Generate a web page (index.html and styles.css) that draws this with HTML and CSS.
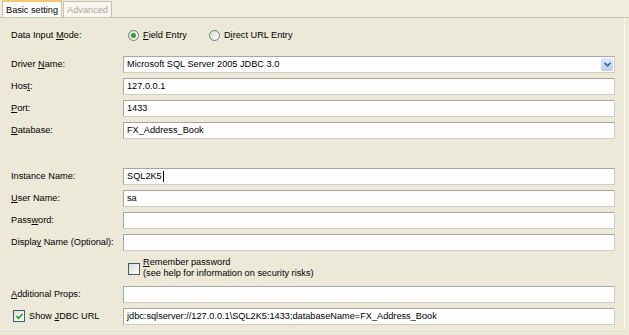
FILE: index.html
```html
<!DOCTYPE html>
<html lang="en">
<head>
    <meta charset="UTF-8">
    <title>Connection Settings</title>
    <link rel="stylesheet" href="styles.css">
</head>
<body>
    <div class="tabs">
        <div class="tab active">Basic setting</div>
        <div class="tab disabled">Advanced</div>
    </div>
    <div class="panel">
        <div class="row mode">
            <label class="lbl">Data Input <u>M</u>ode:</label>
            <div class="radios">
                <span class="radio checked"></span><span class="rtext"><u>F</u>ield Entry</span>
                <span class="radio second"></span><span class="rtext">D<u>i</u>rect URL Entry</span>
            </div>
        </div>
        <div class="row first">
            <label class="lbl">Driver <u>N</u>ame:</label>
            <div class="box select">
                <span class="val">Microsoft SQL Server 2005 JDBC 3.0</span>
                <span class="drop"><svg width="7" height="5" viewBox="0 0 7 5"><path d="M0.5 0.8 L3.5 3.8 L6.5 0.8" fill="none" stroke="#4d6185" stroke-width="1.6"/></svg></span>
            </div>
        </div>
        <div class="row">
            <label class="lbl">Hos<u>t</u>:</label>
            <div class="box"><span class="val">127.0.0.1</span></div>
        </div>
        <div class="row">
            <label class="lbl"><u>P</u>ort:</label>
            <div class="box"><span class="val">1433</span></div>
        </div>
        <div class="row">
            <label class="lbl"><u>D</u>atabase:</label>
            <div class="box"><span class="val">FX_Address_Book</span></div>
        </div>
        <div class="row spaced">
            <label class="lbl">Instance Name:</label>
            <div class="box"><span class="val">SQL2K5<span class="caret"></span></span></div>
        </div>
        <div class="row">
            <label class="lbl"><u>U</u>ser Name:</label>
            <div class="box"><span class="val">sa</span></div>
        </div>
        <div class="row">
            <label class="lbl">Pass<u>w</u>ord:</label>
            <div class="box"></div>
        </div>
        <div class="row">
            <label class="lbl">Displa<u>y</u> Name (Optional):</label>
            <div class="box"></div>
        </div>
        <div class="row remember">
            <div class="lbl"></div>
            <div class="check-wrap">
                <div class="check"></div>
                <div class="ctext"><u>R</u>emember password<br>(see help for information on security risks)</div>
            </div>
        </div>
        <div class="row props">
            <label class="lbl"><u>A</u>dditional Props:</label>
            <div class="box"></div>
        </div>
        <div class="row">
            <label class="lbl jdbc"><span class="check on"><svg width="9" height="9" viewBox="0 0 9 9"><path d="M1.5 4.2 L3.5 6.3 L7.5 2" fill="none" stroke="#21a121" stroke-width="1.7"/></svg></span><span>Show <u>J</u>DBC URL</span></label>
            <div class="box"><span class="val">jdbc:sqlserver://127.0.0.1\SQL2K5:1433;databaseName=FX_Address_Book</span></div>
        </div>
    </div>
</body>
</html>
```

FILE: styles.css
```css
body { margin: 0; background: #ece9d8; font-family: "Liberation Sans", Arial, sans-serif; font-size: 9.2px; color: #000; width: 629px; height: 335px; overflow: hidden; }

.tabs { display: flex; align-items: flex-end; height: 17px; padding-left: 2px; border-bottom: 1px solid #c9c6b8; background: #efedde; }
.tab { height: 15px; padding: 0 3px; display: flex; align-items: center; border: 1px solid #c5c2b2; border-bottom: none; }
.tab.active { height: 17px; background: #fcfcfb; border-top: 2px solid #f3c870; box-sizing: border-box; padding: 0 3px 0 3px; }
.tab.disabled { color: #aca899; background: #f7f6ef; margin-left: 1px; }

.panel { width: 625px; height: 312px; box-sizing: border-box; border-right: 1px solid #f8f7f1; border-bottom: 1px solid #f3f1e8; padding: 6px 0 0 11px; }

.row { display: flex; align-items: center; height: 22px; }
.row.first { margin-top: 7px; }
.row.spaced { margin-top: 24px; }
.row.remember { height: 30px; align-items: flex-start; }

.lbl { width: 112px; flex: none; white-space: nowrap; }
.box { width: 492px; height: 17px; box-sizing: border-box; border: 1px solid #a7a6a0; border-right-color: #cfcdc4; border-bottom-color: #cfcdc4; background: #fefefe; display: flex; align-items: center; padding-left: 3px; position: relative; }
.val { white-space: nowrap; display: flex; align-items: center; }
.caret { display: inline-block; width: 1px; height: 11px; background: #000; margin-left: 1px; }

.select .drop { position: absolute; right: 1px; top: 1px; width: 12px; height: 13px; border-radius: 2px; background: linear-gradient(#dde8fb, #b7cdf2); display: flex; align-items: center; justify-content: center; }

.radios { display: flex; align-items: center; padding-left: 5px; }
.radio { width: 9px; height: 9px; border: 1px solid #6f7b8b; border-radius: 50%; background: linear-gradient(135deg, #dcdad0, #ffffff); position: relative; margin-right: 4px; }
.radio.checked::after { content: ""; position: absolute; left: 2px; top: 2px; width: 5px; height: 5px; border-radius: 50%; background: #2fa32f; }
.radio.second { margin-left: 22px; }

.check-wrap { display: flex; align-items: center; padding-left: 5px; padding-top: 4px; }
.check { width: 10px; height: 10px; flex: none; border: 1px solid #3c5c7c; background: linear-gradient(135deg, #dcdad0, #ffffff); margin-right: 3px; margin-top: 1px; display: flex; align-items: center; justify-content: center; }
.ctext { line-height: 11px; }
.lbl.jdbc { display: flex; align-items: center; padding-left: 2px; box-sizing: border-box; }
.lbl.jdbc .check { margin-right: 4px; margin-top: 0; }
```
